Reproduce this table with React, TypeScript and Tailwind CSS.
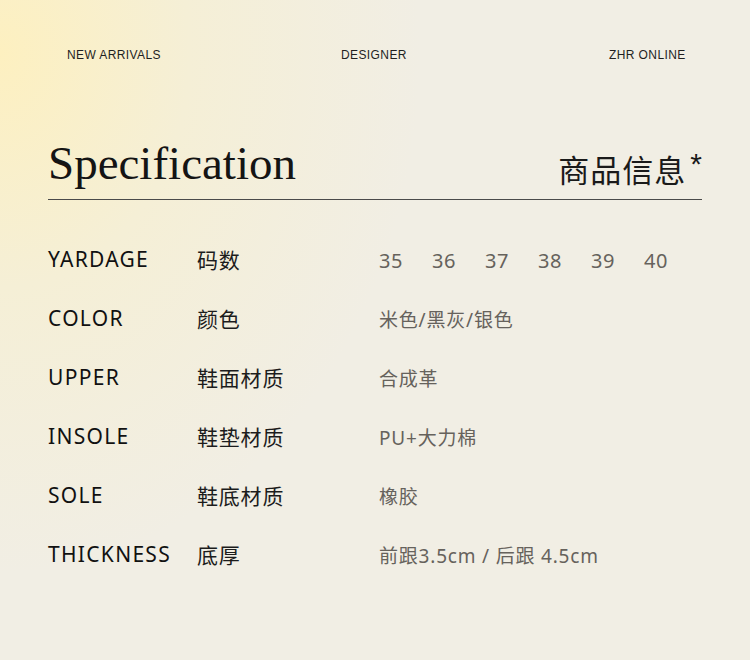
const rows = [
  { en: "YARDAGE", cn: "码数", value: null },
  { en: "COLOR", cn: "颜色", value: "米色/黑灰/银色" },
  { en: "UPPER", cn: "鞋面材质", value: "合成革" },
  { en: "INSOLE", cn: "鞋垫材质", value: "PU+大力棉" },
  { en: "SOLE", cn: "鞋底材质", value: "橡胶" },
  { en: "THICKNESS", cn: "底厚", value: "前跟3.5cm / 后跟 4.5cm" },
]

const sizes = ["35", "36", "37", "38", "39", "40"]

export default function App() {
  return (
    <div className="w-[750px] h-[660px] overflow-hidden bg-[#f1eee4] bg-[radial-gradient(ellipse_420px_520px_at_0%_8%,#fdf0c0_0%,#f5efd6_45%,#f1eee4_100%)]">
      {/* top nav */}
      <div className="flex pt-[48px] pl-[67px] text-[12px] leading-[15px] text-[#1f1f1f] font-['Liberation_Sans',Arial,sans-serif] tracking-[0.4px]">
        <span className="w-[274px]">NEW ARRIVALS</span>
        <span className="w-[268px]">DESIGNER</span>
        <span>ZHR ONLINE</span>
      </div>

      {/* title */}
      <div className="mx-[48px] mt-[76px] flex items-end justify-between border-b border-[#4a4a4a] pb-[12px]">
        <h1 className="text-[47px] leading-[48px] text-[#141414] font-['Liberation_Serif','Times_New_Roman',serif] font-normal">
          Specification
        </h1>
        <div className="flex items-start text-[#1a1a1a]">
          <span className="text-[31px] leading-[36px] tracking-[1px] font-['Noto_Sans_CJK_SC',sans-serif]">商品信息</span>
          <span className="ml-[4px] -mt-[2px] text-[30px] leading-[30px] font-['Liberation_Sans',Arial,sans-serif]">*</span>
        </div>
      </div>

      {/* spec rows */}
      <div className="mt-[30px] ml-[48px]">
        {rows.map((row) => (
          <div key={row.en} className="flex h-[59px] items-center">
            <span className="w-[149px] text-[21px] tracking-[1.3px] text-[#111] font-['Noto_Sans',sans-serif]">
              {row.en}
            </span>
            <span className="w-[182px] text-[21px] tracking-[0.8px] text-[#1c1c1c] font-['Noto_Sans_CJK_SC',sans-serif]">
              {row.cn}
            </span>
            {row.value === null ? (
              <div className="flex pt-[3px] text-[20px] text-[#66625c] font-['Noto_Sans',sans-serif] tracking-[0.5px]">
                {sizes.map((s) => (
                  <span key={s} className="w-[53px]">{s}</span>
                ))}
              </div>
            ) : (
              <span className="pt-[3px] text-[19px] tracking-[0.8px] text-[#66625c] font-['Noto_Sans','Noto_Sans_CJK_SC',sans-serif]">
                {row.value}
              </span>
            )}
          </div>
        ))}
      </div>
    </div>
  )
}
